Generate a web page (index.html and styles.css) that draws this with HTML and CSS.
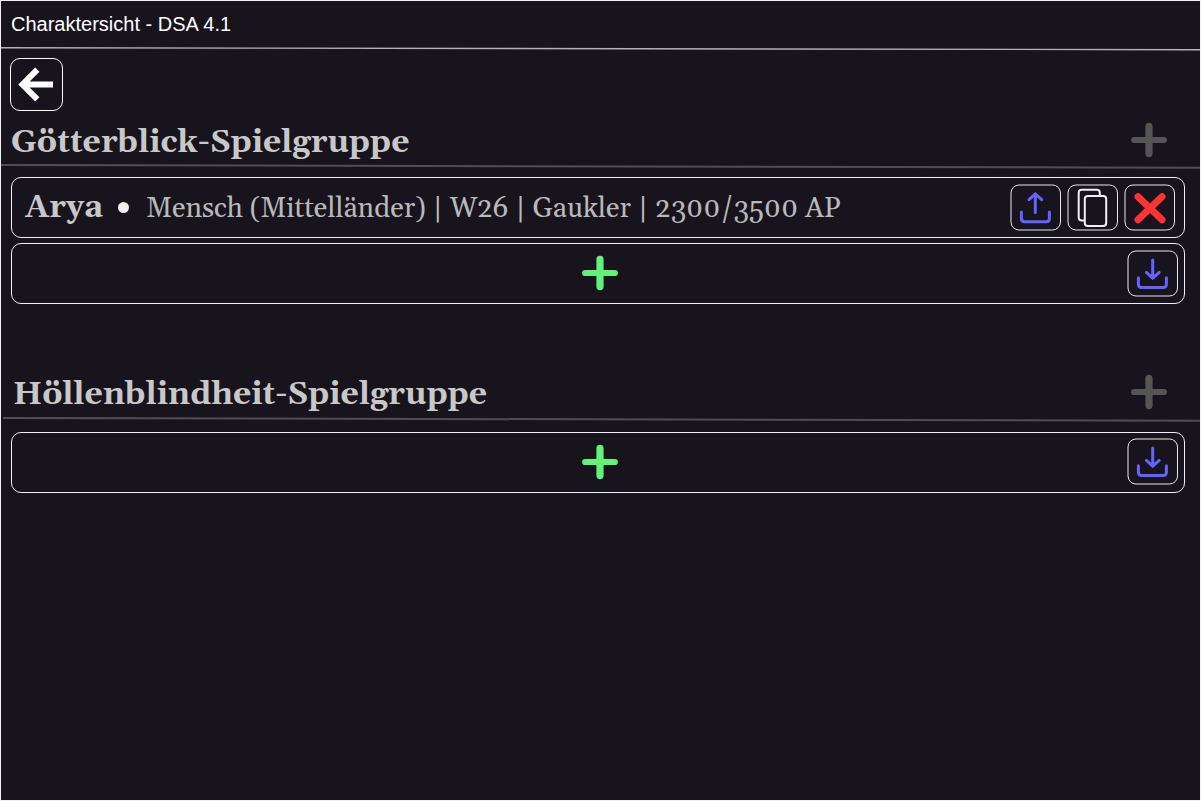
FILE: index.html
```html
<!DOCTYPE html>
<html lang="de">
<head>
<meta charset="utf-8">
<title>Charaktersicht - DSA 4.1</title>
<link rel="stylesheet" href="styles.css">
</head>
<body>
<svg class="defs" aria-hidden="true">
  <symbol id="plus" viewBox="0 0 36 36"><path d="M3.2 18H32.8" stroke-width="6.2"/><path d="M18 4.4V31.6" stroke-width="7.2"/></symbol>
  <symbol id="frame" viewBox="0 0 52 48"><rect x="1" y="1" width="49.5" height="45" rx="8"/></symbol>
  <symbol id="download" viewBox="0 0 52 48"><path d="M11.4 27.7V34.3q0 3.2 3.2 3.2H36.2q3.2 0 3.2-3.2V27.7M25.7 10V28M19.4 22.4L25.7 28.2L32.2 22.4"/></symbol>
</svg>
<div class="window">
  <header class="titlebar">Charaktersicht - DSA 4.1</header>
  <svg class="rule rule-top" viewBox="0 0 1199 4"><path d="M0 .7L1199 2.7"/></svg>
  <main class="content">
    <button class="back" aria-label="Zurück"><svg viewBox="0 0 51 51"><path d="M26.3 10.7L11.5 25.5L26.3 40.3M11 25.5H42"/></svg></button>

    <section class="group">
      <div class="heading"><h2>Götterblick-Spielgruppe</h2><svg class="plus muted"><use href="#plus"/></svg></div>
      <svg class="rule rule-group" viewBox="0 0 1199 6"><path d="M0 .9L1199 3.8"/></svg>
      <div class="row">
        <span class="hero">Arya</span><span class="dot"></span><span class="info">Mensch (Mittelländer) | W26 | Gaukler | 2300/3500 AP</span>
        <div class="actions">
          <svg class="btn"><use class="frame" href="#frame"/><path class="transfer" d="M11.4 28V34.6q0 3.2 3.2 3.2H36.2q3.2 0 3.2-3.2V28M25.3 28.5V10M19 15.7L25.3 9.9L31.8 15.7"/></svg>
          <svg class="btn"><use class="frame" href="#frame"/><path class="copy" d="M17.5 36.4H14.7q-3 0-3-3V8.7q0-3 3-3H29.8q3 0 3 3V12"/><rect class="copy" x="17.8" y="12" width="21.4" height="30" rx="3"/></svg>
          <svg class="btn"><use class="frame" href="#frame"/><path class="remove" d="M14 12.7L38 35.8M38 12.7L14 35.8"/></svg>
        </div>
      </div>
      <div class="row add">
        <svg class="plus green"><use href="#plus"/></svg>
        <svg class="btn"><use class="frame" href="#frame"/><use class="transfer" href="#download"/></svg>
      </div>
    </section>

    <section class="group second">
      <div class="heading"><h2>Höllenblindheit-Spielgruppe</h2><svg class="plus muted"><use href="#plus"/></svg></div>
      <svg class="rule rule-group" viewBox="0 0 1199 6"><path d="M2 .9L1199 3.8"/></svg>
      <div class="row add">
        <svg class="plus green"><use href="#plus"/></svg>
        <svg class="btn"><use class="frame" href="#frame"/><use class="transfer" href="#download"/></svg>
      </div>
    </section>
  </main>
</div>
</body>
</html>
```

FILE: styles.css
```css
* { box-sizing: border-box; }
body { margin: 0; background: #18141e; }
.defs { position: absolute; width: 0; height: 0; }
svg { display: block; fill: none; flex: none; }
.window { width: 1201px; height: 801px; border: 1px solid #f0f0f0; background: #18141e; overflow: hidden; }
.titlebar { height: 46px; padding: 0 10px; font: 20px/46px "Liberation Sans", Arial, sans-serif; color: #fff; }
.rule { width: 1199px; }
.rule-top { height: 4px; stroke: #b4b2b6; stroke-width: 1.4; }
.back { display: block; width: 53px; height: 53px; margin: 7px 0 0 9px; padding: 0; border: 1px solid #fff; border-radius: 10px; background: none; }
.back svg { width: 51px; height: 51px; stroke: #fff; stroke-width: 6; }
.heading { display: flex; align-items: center; justify-content: space-between; height: 53px; padding: 4px 33px 0 10px; }
h2 { margin: 0; padding-top: 6px; font: bold 32px/40px Georgia, Gelasio, "Liberation Serif", serif; color: #c8c8c8; white-space: nowrap; }
.plus { width: 36px; height: 36px; stroke-linecap: round; }
.muted { stroke: #555; }
.green { margin-bottom: 2px; stroke: #62f277; }
.rule-group { height: 6px; stroke: #504e52; stroke-width: 2; }
.row { display: flex; align-items: center; width: 1174px; height: 61px; margin: 7px 0 0 10px; border: 1px solid #f0f0f0; border-radius: 10px; padding: 0 5px 0 13px; }
.row + .row { margin-top: 5px; }
.hero { font: bold 32px/40px Georgia, Gelasio, "Liberation Serif", serif; color: #c8c8c8; }
.dot { width: 11px; height: 11px; margin: 0 17px 0 15px; border-radius: 50%; background: #f0f0f0; }
.info { padding-top: 2px; font: 28px/40px Georgia, Gelasio, "Liberation Serif", serif; color: #b9b9b9; white-space: nowrap; }
.actions { display: flex; gap: 5px; margin: 0 3px 0 auto; }
.btn { width: 52px; height: 48px; }
.frame { stroke: #e8e8e8; stroke-width: 1; }
.transfer { stroke: #6363ff; stroke-width: 3; stroke-linecap: round; }
.copy { stroke: #f0f0f0; stroke-width: 2; }
.remove { stroke: #f33; stroke-width: 7; stroke-linecap: round; }
.add { padding-left: 570px; justify-content: space-between; }
.second { margin-top: 59px; }
.second .heading { height: 54px; padding: 4px 33px 1px 12px; }
.second .row { margin-top: 9px; padding-bottom: 2px; }
.second .green { margin-bottom: 0; }
```
